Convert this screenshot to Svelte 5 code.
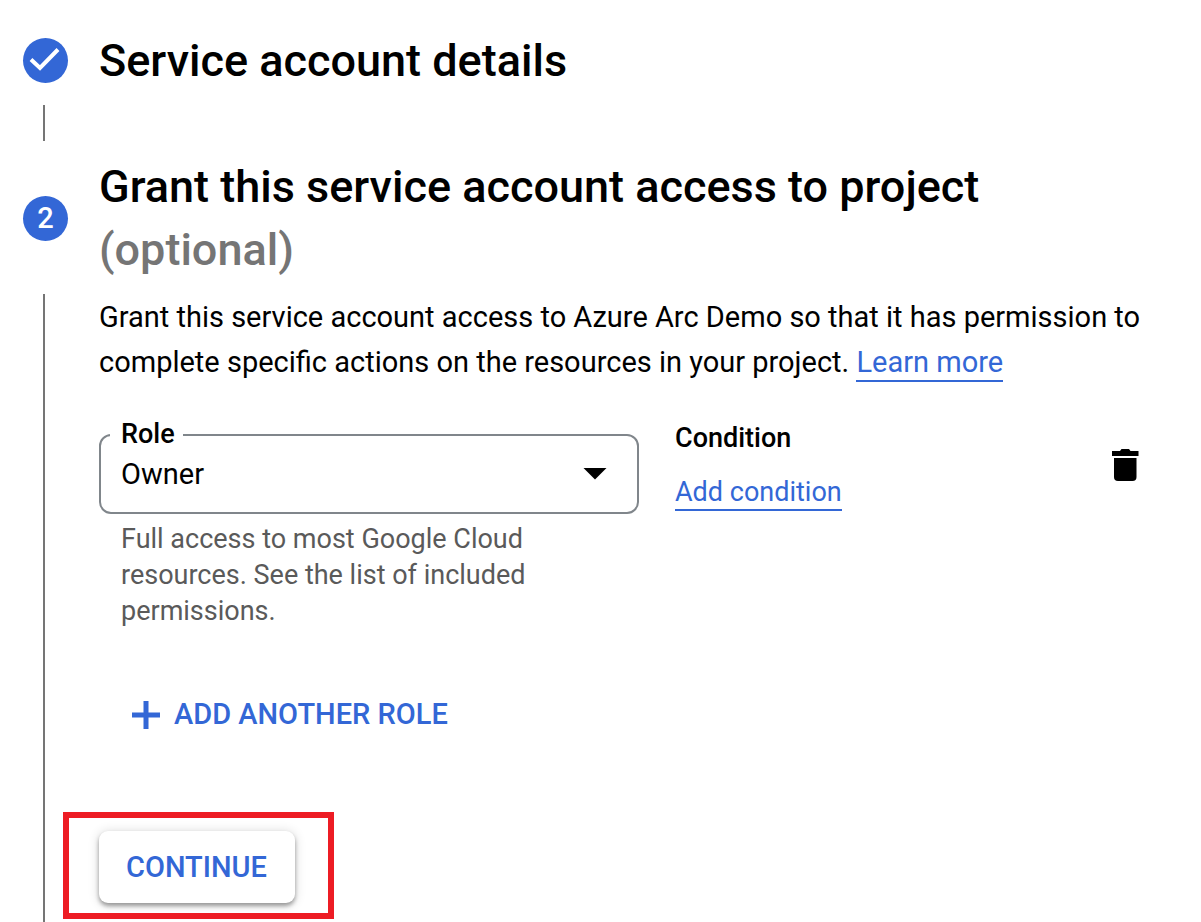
<script>
  let role = $state('Owner');
  const roles = ['Owner', 'Editor', 'Viewer'];
</script>

<main class="stepper">
  <section class="step">
    <header class="step-header">
      <span class="badge">
        <svg viewBox="0 0 45 45" aria-hidden="true">
          <path d="M8 21.500L17 30L35 11.500" fill="none" stroke="#fff" stroke-width="4" />
        </svg>
      </span>
      <h2>Service account details</h2>
    </header>
    <div class="connector short"></div>
  </section>

  <section class="step current">
    <header class="step-header">
      <span class="badge">2</span>
      <h2>Grant this service account access to project <span class="optional">(optional)</span></h2>
    </header>

    <div class="step-body">
      <div class="connector"></div>
      <div class="content">
        <p class="description">
          Grant this service account access to Azure Arc Demo so that it has permission to complete
          specific actions on the resources in your project. <a href="#learn">Learn more</a>
        </p>

        <div class="role-row">
          <div class="role">
            <fieldset>
              <legend><label for="role">Role</label></legend>
              <div class="select-wrap">
                <select id="role" bind:value={role} aria-describedby="role-hint">
                  {#each roles as name}
                    <option>{name}</option>
                  {/each}
                </select>
                <svg class="arrow" viewBox="0 0 24 12" aria-hidden="true">
                  <path d="M0.5 0H23.500L12 11.500Z" />
                </svg>
              </div>
            </fieldset>
            <p class="hint" id="role-hint">
              Full access to most Google Cloud resources. See the list of included permissions.
            </p>
          </div>

          <div class="condition">
            <h3>Condition</h3>
            <a href="#condition">Add condition</a>
          </div>

          <button class="delete" type="button" aria-label="Delete role">
            <svg viewBox="0 0 28 34" aria-hidden="true">
              <path d="M1 3H9L10.500 1H18L19.500 3H27.500V8H1Z" />
              <path d="M3 10H25.500V29Q25.500 33 21.500 33H7Q3 33 3 29Z" />
            </svg>
          </button>
        </div>

        <button class="add" type="button">
          <svg viewBox="0 0 28 28" aria-hidden="true">
            <path d="M14 0V28M0 14H28" fill="none" stroke="#3367d6" stroke-width="5" />
          </svg>
          ADD ANOTHER ROLE
        </button>

        <div class="actions">
          <button class="continue" type="button">CONTINUE</button>
        </div>
      </div>
    </div>
  </section>
</main>

<style>
  :global(body) {
    margin: 0;
    background: #fff;
  }

  .stepper {
    box-sizing: border-box;
    min-height: 100vh;
    padding: 29px 48px 0 23px;
    display: flex;
    flex-direction: column;
    font-family: Roboto, sans-serif;
    font-size: 29px;
    line-height: 45px;
    color: #000;
  }

  .current,
  .step-body {
    flex: 1;
  }

  .current {
    display: flex;
    flex-direction: column;
  }

  .step-header,
  .step-body {
    display: grid;
    grid-template-columns: 45px minmax(0, 1fr);
    column-gap: 31px;
  }

  .step-header {
    align-items: center;
  }

  .badge {
    width: 45px;
    height: 45px;
    border-radius: 50%;
    background: #3367d6;
    color: #fff;
    font-size: 29px;
    font-weight: 500;
    text-align: center;
  }

  svg {
    display: block;
    flex: none;
  }

  h2,
  h3,
  p {
    margin: 0;
  }

  h2 {
    font-size: 45px;
    font-weight: 500;
    line-height: 63px;
  }

  .optional {
    color: #757575;
  }

  .connector {
    width: 2px;
    margin: 13px 0 0 20px;
    background: #757575;
  }

  .short {
    height: 36px;
    margin-bottom: 14px;
  }

  .content {
    padding: 14px 0 18px;
  }

  a {
    padding-bottom: 1px;
    color: #3367d6;
    text-decoration: none;
    border-bottom: 2px solid #3367d6;
  }

  .role-row {
    display: grid;
    grid-template-columns: minmax(0, 540fr) minmax(0, 386fr) 56px;
    column-gap: 36px;
    align-items: start;
    margin-top: 34px;
  }

  fieldset {
    min-width: 0;
    margin: 0;
    padding: 0;
    border: 2px solid #80868b;
    border-radius: 12px;
  }

  legend {
    margin-left: 9px;
    padding: 0 8px 2px 11px;
    font-size: 27px;
    font-weight: 500;
    line-height: 30px;
  }

  .select-wrap {
    display: grid;
    align-items: start;
    height: 61px;
  }

  select,
  .arrow {
    grid-area: 1 / 1;
  }

  select {
    appearance: none;
    width: 100%;
    height: 47px;
    padding: 0 60px 0 20px;
    border: 0;
    background: transparent;
    color: #000;
    font: inherit;
  }

  .arrow {
    justify-self: end;
    width: 24px;
    height: 12px;
    margin: 17px 30px 0 0;
    pointer-events: none;
  }

  .hint {
    padding: 7px 80px 0 22px;
    font-size: 27px;
    line-height: 36px;
    color: #5a5a5a;
  }

  .condition {
    padding-top: 1px;
    font-size: 27px;
    line-height: 36px;
  }

  h3 {
    margin-bottom: 18px;
    font-size: 27px;
    font-weight: 500;
    line-height: 36px;
  }

  button {
    border: 0;
    background: none;
    color: #3367d6;
    font-family: inherit;
    font-size: 29px;
    font-weight: 500;
    line-height: 45px;
    cursor: pointer;
  }

  .delete {
    margin-top: 29px;
    padding: 0;
  }

  .delete svg {
    width: 28px;
    height: 34px;
    margin: 0 auto;
  }

  .add {
    display: flex;
    align-items: center;
    gap: 14px;
    margin-top: 63px;
    padding: 0 33px;
  }

  .add svg {
    width: 28px;
    height: 28px;
  }

  .actions {
    display: flex;
    margin-top: 94px;
  }

  .continue {
    position: relative;
    padding: 14px 28px 13px 27px;
    border-radius: 9px;
    background: #fff;
    box-shadow:
      0 3px 4px rgba(0, 0, 0, 0.35),
      0 1px 12px rgba(0, 0, 0, 0.16);
  }

  .continue::after {
    content: '';
    position: absolute;
    inset: -19px -39px -16px -36px;
    border: 6px solid #ed1c24;
    pointer-events: none;
  }
</style>
